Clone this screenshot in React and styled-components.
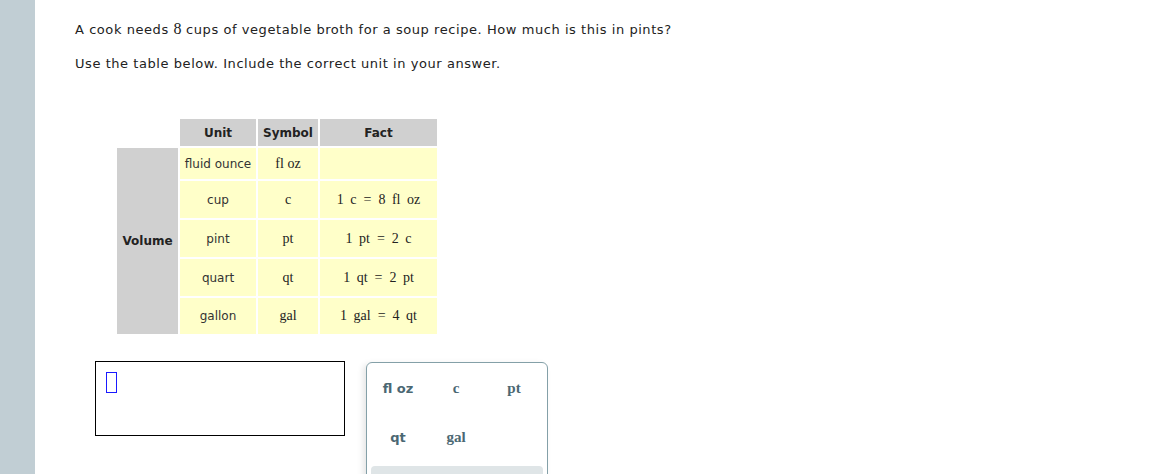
import React from 'react';
import styled, { createGlobalStyle } from 'styled-components';

const GlobalStyle = createGlobalStyle`
  html, body {
    margin: 0;
    padding: 0;
    height: 474px;
    overflow: hidden;
    background: #ffffff;
  }
`;

const Page = styled.div`
  display: flex;
  height: 474px;
  font-family: "DejaVu Sans", Verdana, sans-serif;
  color: #222;
`;

const SideBar = styled.div`
  width: 35px;
  flex-shrink: 0;
  background: #c1ced4;
`;

const Content = styled.div`
  flex: 1;
  padding: 20px 0 0 40px;
`;

const Question = styled.p`
  margin: 0 0 ${props => props.gap}px;
  font-size: 13px;
  line-height: 18px;
  letter-spacing: 0.56px;
`;

const Num = styled.span`
  font-family: "Liberation Serif", "Times New Roman", serif;
  font-size: 16px;
  letter-spacing: 0;
`;

const Table = styled.table`
  margin: 44px 0 0 40px;
  border-spacing: 2px;
  border-collapse: separate;
  font-size: 12px;
`;

const Head = styled.th`
  background: ${props => (props.empty ? 'transparent' : '#d0d0d0')};
  height: 27px;
  padding: 0;
  font-weight: bold;
  font-size: 12px;
  text-align: center;
  color: #222;
`;

const Group = styled.th`
  background: #d0d0d0;
  width: 61px;
  padding: 0;
  font-size: 12px;
  font-weight: bold;
  text-align: center;
`;

const Cell = styled.td`
  background: #ffffc9;
  height: ${props => props.h}px;
  width: ${props => props.w}px;
  padding: 0;
  text-align: center;
  vertical-align: middle;
  color: #333;
`;

const Serif = styled.span`
  font-family: "Liberation Serif", "Times New Roman", serif;
  font-size: 14px;
  color: #222;
  word-spacing: ${props => props.spread || 0}px;
`;

const Eq = styled.span`
  margin: 0 7px;
`;

const AnswerRow = styled.div`
  display: flex;
  align-items: flex-start;
  gap: 21px;
  margin: 25px 0 0 20px;
`;

const AnswerBox = styled.div`
  width: 250px;
  height: 75px;
  border: 1px solid #000;
  padding: 10px 0 0 10px;
  box-sizing: border-box;
`;

const Caret = styled.div`
  width: 9px;
  height: 19px;
  border: 1px solid #1a1aff;
`;

const Palette = styled.div`
  width: 182px;
  height: 130px;
  margin-top: 1px;
  border: 1px solid #84a0a8;
  border-radius: 6px;
  box-sizing: border-box;
  box-shadow: -3px 2px 6px rgba(0, 0, 0, 0.1);
  padding: 12px 4px 0;
  display: flex;
  flex-direction: column;
`;

const Keys = styled.div`
  display: grid;
  grid-template-columns: 58px 58px 58px;
  grid-template-rows: 49px 41px;
  margin-left: -2px;
`;

const Key = styled.div`
  display: flex;
  justify-content: center;
  align-items: center;
  height: 26px;
  color: #4b6873;
  font-weight: bold;
  font-family: ${props => (props.serif ? '"Liberation Serif", "Times New Roman", serif' : '"DejaVu Sans", Verdana, sans-serif')};
  font-size: ${props => (props.serif ? '15px' : '13px')};
`;

const Tray = styled.div`
  margin-top: 1px;
  height: 20px;
  background: #dfe5e7;
  border-radius: 4px;
`;

const rows = [
  { unit: 'fluid ounce', sym: 'fl oz', fact: null, h: 31 },
  { unit: 'cup', sym: 'c', fact: ['1 c', '8 fl oz'], h: 37 },
  { unit: 'pint', sym: 'pt', fact: ['1 pt', '2 c'], h: 37 },
  { unit: 'quart', sym: 'qt', fact: ['1 qt', '2 pt'], h: 37 },
  { unit: 'gallon', sym: 'gal', fact: ['1 gal', '4 qt'], h: 36 },
];

const keys = [
  { label: 'fl oz', serif: false },
  { label: 'c', serif: true },
  { label: 'pt', serif: true },
  { label: 'qt', serif: false },
  { label: 'gal', serif: true },
];

export default function App() {
  return (
    <Page>
      <GlobalStyle />
      <SideBar />
      <Content>
        <Question gap={16}>
          A cook needs <Num>8</Num> cups of vegetable broth for a soup recipe. How much is this in pints?
        </Question>
        <Question gap={0}>Use the table below. Include the correct unit in your answer.</Question>
        <Table>
          <tbody>
            <tr>
              <Head empty />
              <Head>Unit</Head>
              <Head>Symbol</Head>
              <Head>Fact</Head>
            </tr>
            {rows.map((r, i) => (
              <tr key={r.unit}>
                {i === 0 && <Group rowSpan={5}>Volume</Group>}
                <Cell h={r.h} w={76}>{r.unit}</Cell>
                <Cell h={r.h} w={60}><Serif>{r.sym}</Serif></Cell>
                <Cell h={r.h} w={117}>
                  {r.fact && (
                    <Serif spread={3}>
                      {r.fact[0]}<Eq>=</Eq>{r.fact[1]}
                    </Serif>
                  )}
                </Cell>
              </tr>
            ))}
          </tbody>
        </Table>
        <AnswerRow>
          <AnswerBox>
            <Caret />
          </AnswerBox>
          <Palette>
            <Keys>
              {keys.map(k => (
                <Key key={k.label} serif={k.serif}>{k.label}</Key>
              ))}
            </Keys>
            <Tray />
          </Palette>
        </AnswerRow>
      </Content>
    </Page>
  );
}
